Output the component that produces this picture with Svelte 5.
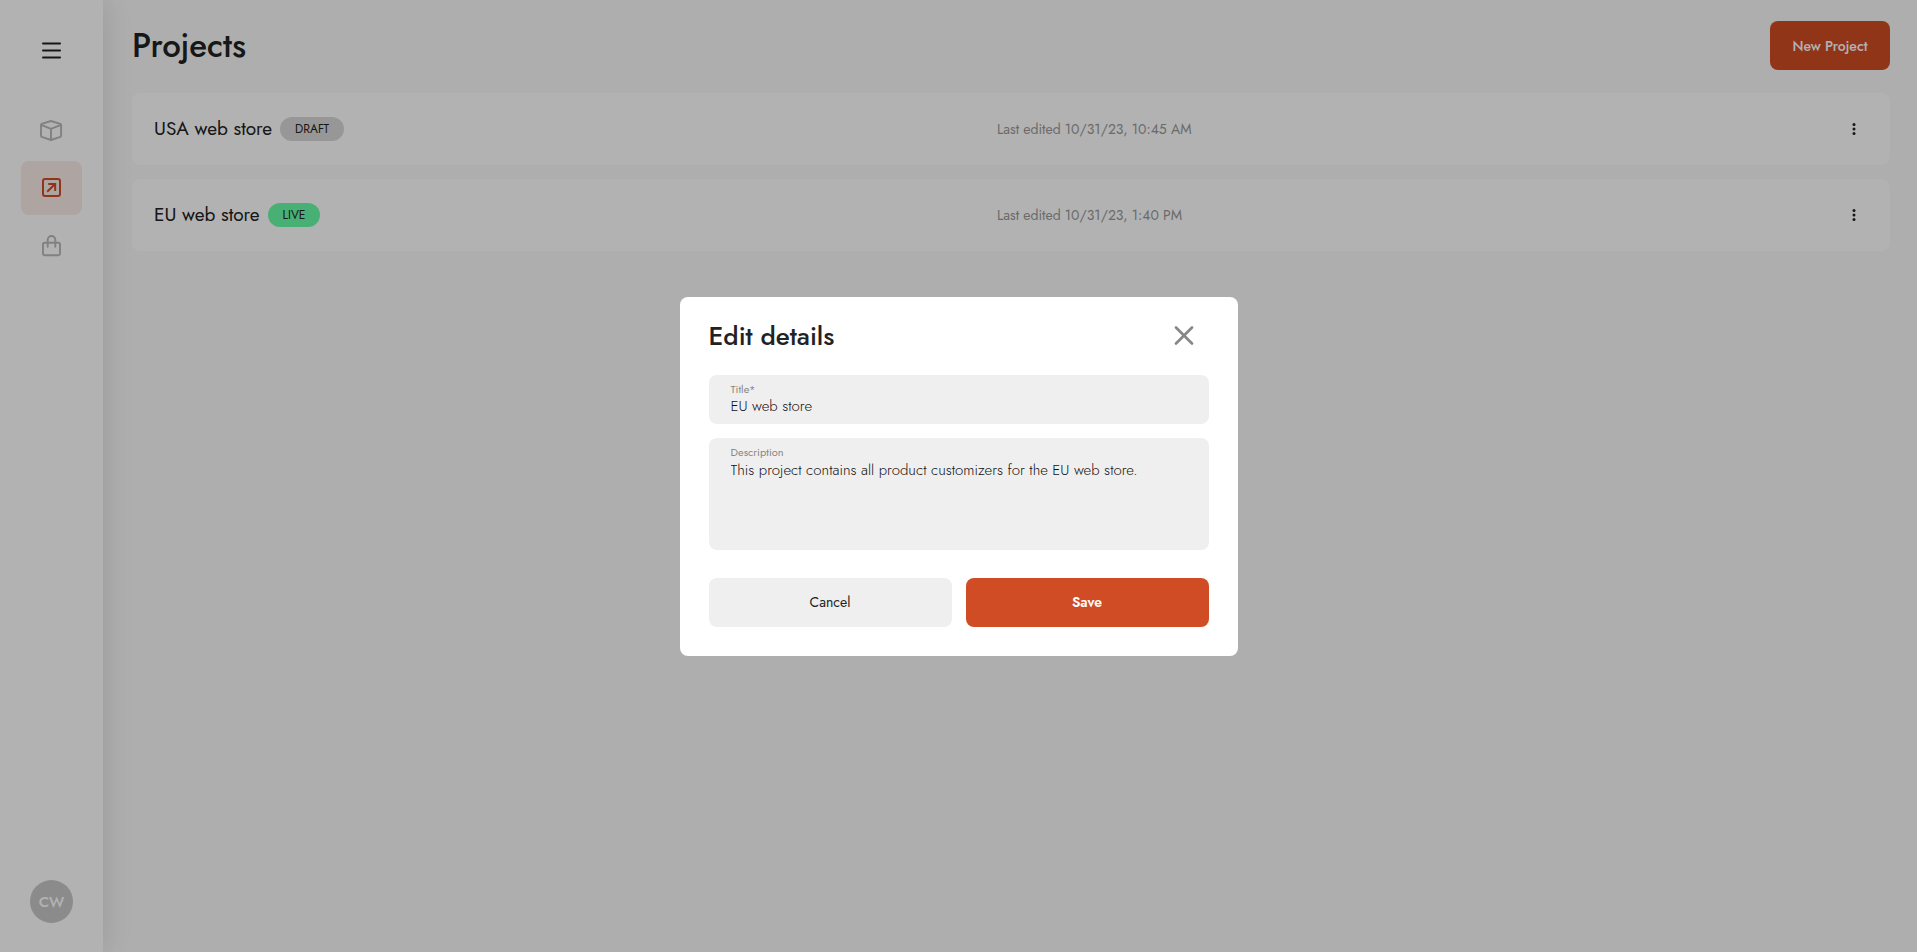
<script>
	let projects = $state([
		{ title: 'USA web store', status: 'Draft', edited: '10/31/23, 10:45 AM' },
		{ title: 'EU web store', status: 'Live', edited: '10/31/23, 1:40 PM' }
	]);

	let modalOpen = $state(true);
	let selected = $state(1);
	let title = $state('EU web store');
	let description = $state('This project contains all product customizers for the EU web store.');

	function openModal(index) {
		selected = index;
		title = projects[index].title;
		modalOpen = true;
	}

	function closeModal() {
		modalOpen = false;
	}

	function save(event) {
		event.preventDefault();
		projects[selected].title = title;
		closeModal();
	}
</script>

<div class="app">
	<aside class="sidebar">
		<button class="menu-btn" aria-label="Toggle menu">
			<svg width="19" height="20" viewBox="0 0 19 20" fill="none" stroke="currentColor" stroke-width="2" stroke-linecap="round">
				<path d="M1 2.6h17M1 9.6h17M1 16.6h17" />
			</svg>
		</button>

		<nav>
			<a href="#products" aria-label="Products">
				<svg width="23" height="22" viewBox="0 0 23 22" fill="none" stroke="currentColor" stroke-width="1.9" stroke-linejoin="round">
					<path d="M11 2 20.3 4.9Q21.1 5.2 21.1 6V16.8Q21.1 17.6 20.3 17.9L11 21 1.7 17.9Q1 17.6 1 16.8V6Q1 5.2 1.7 4.9Z" />
					<path d="M1.2 5.8 11 9.8 20.9 5.8M11 9.8V20.8" />
				</svg>
			</a>
			<a class="active" href="#projects" aria-label="Projects">
				<svg width="19" height="20" viewBox="0 0 19 20" fill="none" stroke="currentColor" stroke-width="2">
					<rect x="1" y="1" width="17" height="17" rx="2" />
					<path d="M5.2 13.8 13 6M6.2 5.9H13.2V12.9" />
				</svg>
			</a>
			<a href="#orders" aria-label="Orders">
				<svg width="19" height="22" viewBox="0 0 19 22" fill="none" stroke="currentColor" stroke-width="1.9">
					<rect x="1" y="7.8" width="17" height="12.4" rx="1.6" />
					<path d="M5.7 11.8V4.8a3.8 3.8 0 0 1 7.6 0v7" stroke-linecap="round" />
				</svg>
			</a>
		</nav>

		<div class="avatar">CW</div>
	</aside>

	<main>
		<header>
			<h1>Projects</h1>
			<button class="btn primary new-project">New Project</button>
		</header>

		<ul class="projects">
			{#each projects as project, i}
				<li>
					<div class="name">
						<h2>{project.title}</h2>
						<span class="badge" class:live={project.status === 'Live'}>{project.status}</span>
					</div>
					<p>Last edited {project.edited}</p>
					<button class="more" aria-label="Project options" onclick={() => openModal(i)}>
						<svg width="4" height="14" viewBox="0 0 4 14" fill="currentColor">
							<circle cx="2" cy="2.5" r="1.5" />
							<circle cx="2" cy="7" r="1.5" />
							<circle cx="2" cy="11.5" r="1.5" />
						</svg>
					</button>
				</li>
			{/each}
		</ul>
	</main>
</div>

{#if modalOpen}
	<div class="overlay">
		<div class="modal" role="dialog" aria-modal="true" aria-labelledby="modal-title">
			<div class="modal-header">
				<h2 id="modal-title">Edit details</h2>
				<button class="close" aria-label="Close" onclick={closeModal}>
					<svg width="20" height="20" viewBox="0 0 20 20" fill="none" stroke="currentColor" stroke-width="2.6" stroke-linecap="round">
						<path d="M2 1.5 18 17.5M18 1.5 2 17.5" />
					</svg>
				</button>
			</div>

			<form onsubmit={save}>
				<div class="field">
					<label for="title">Title*</label>
					<input id="title" type="text" bind:value={title} />
				</div>
				<div class="field">
					<label for="description">Description</label>
					<textarea id="description" rows="4" bind:value={description}></textarea>
				</div>
				<div class="actions">
					<button class="btn" type="button" onclick={closeModal}>Cancel</button>
					<button class="btn primary save" type="submit">Save</button>
				</div>
			</form>
		</div>
	</div>
{/if}

<style>
	:global(body) {
		margin: 0;
		background: #f9f9f9;
		color: #222;
		font-family: 'Jost', 'Lato', sans-serif;
	}

	h1,
	h2,
	p,
	ul {
		margin: 0;
		padding: 0;
	}

	button,
	input,
	textarea {
		font: inherit;
		color: inherit;
		border: none;
		background: none;
		padding: 0;
		margin: 0;
	}

	button {
		cursor: pointer;
	}

	svg {
		display: block;
	}

	.app {
		display: flex;
		min-height: 100vh;
	}

	/* Sidebar */
	.sidebar {
		display: flex;
		flex-direction: column;
		align-items: center;
		box-sizing: border-box;
		width: 103px;
		padding: 36px 0 29px;
		background: #fff;
		box-shadow: 0 0 29px rgba(0, 0, 0, 0.12);
	}

	.menu-btn {
		padding: 5px;
	}

	nav {
		display: flex;
		flex-direction: column;
		gap: 4px;
		margin-top: 37px;
	}

	nav a {
		display: grid;
		place-items: center;
		width: 61px;
		height: 54px;
		border-radius: 8px;
		color: #b9b9b9;
	}

	nav a.active {
		background: #faece8;
		color: #d04c25;
	}

	.avatar {
		display: grid;
		place-items: center;
		width: 43px;
		height: 43px;
		margin-top: auto;
		border-radius: 50%;
		background: #c8c8c8;
		color: #fff;
		font-size: 15px;
		font-weight: 500;
	}

	/* Content */
	main {
		flex: 1;
		padding: 21px 27px 29px 29px;
	}

	header {
		display: flex;
		align-items: center;
		justify-content: space-between;
		margin-bottom: 23px;
	}

	h1 {
		font-size: 33px;
		line-height: 49px;
		font-weight: 500;
	}

	.btn {
		height: 49px;
		border-radius: 8px;
		background: #efefef;
		font-size: 14px;
		font-weight: 400;
	}

	.btn.primary {
		background: #d04c25;
		color: #fff;
		font-weight: 500;
	}

	.btn.save {
		font-weight: 600;
	}

	.new-project {
		min-width: 120px;
	}

	.projects {
		display: flex;
		flex-direction: column;
		gap: 14px;
		list-style: none;
	}

	.projects li {
		display: grid;
		grid-template-columns: 1fr 1fr 28px;
		align-items: center;
		height: 72px;
		padding: 0 22px;
		border-radius: 8px;
		background: #fff;
	}

	.name {
		display: flex;
		align-items: center;
		gap: 8px;
	}

	.name h2 {
		font-size: 19px;
		line-height: 24px;
		font-weight: 400;
	}

	.badge {
		padding: 0 15px;
		border-radius: 12px;
		background: #d9d9d9;
		font-size: 12px;
		line-height: 24px;
		text-transform: uppercase;
	}

	.badge.live {
		background: #69fda8;
	}

	.projects p {
		color: #999;
		font-size: 14px;
		line-height: 20px;
	}

	.more {
		display: grid;
		place-items: center;
		height: 28px;
	}

	/* Modal */
	.overlay {
		position: fixed;
		inset: 0;
		display: grid;
		place-items: center;
		background: rgba(0, 0, 0, 0.3);
	}

	.modal {
		box-sizing: border-box;
		width: 558px;
		max-width: 100%;
		padding: 14px 29px 29px;
		border-radius: 8px;
		background: #fff;
	}

	.modal-header {
		display: flex;
		align-items: center;
		justify-content: space-between;
		margin-bottom: 14px;
	}

	.modal-header h2 {
		font-size: 26px;
		line-height: 32px;
		font-weight: 500;
	}

	.close {
		padding: 15px;
		color: #868686;
	}

	form {
		display: flex;
		flex-direction: column;
		gap: 14px;
	}

	.field {
		display: flex;
		flex-direction: column;
		padding: 8px 22px;
		border-radius: 8px;
		background: #efefef;
	}

	.field label {
		color: #868686;
		font-size: 11px;
		line-height: 13px;
	}

	.field input,
	.field textarea {
		height: 20px;
		color: #111;
		font-size: 15px;
		line-height: 20px;
		font-weight: 300;
		outline: none;
		resize: none;
	}

	.field textarea {
		height: 83px;
		line-height: 22px;
	}

	.actions {
		display: grid;
		grid-template-columns: 1fr 1fr;
		gap: 14px;
		margin-top: 14px;
	}
</style>
